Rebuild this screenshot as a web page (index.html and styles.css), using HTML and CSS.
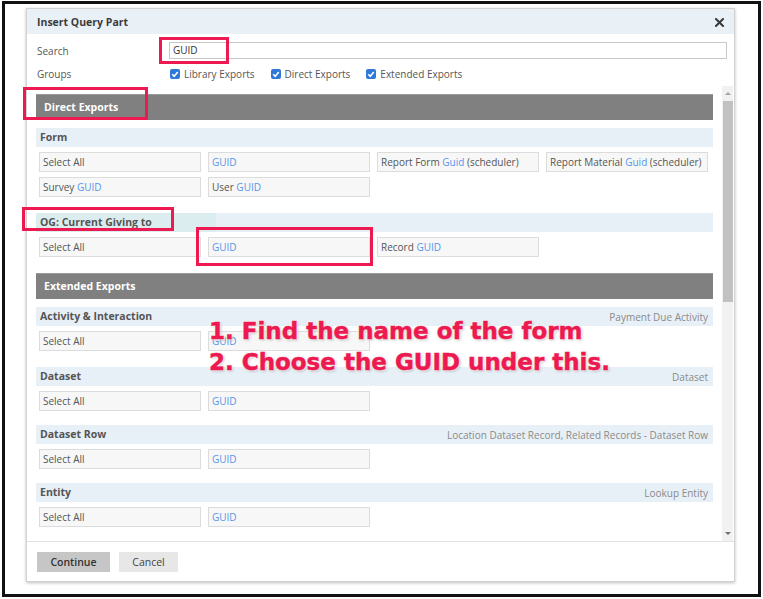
FILE: index.html
```html
<!DOCTYPE html>
<html>
<head>
<meta charset="utf-8">
<link rel="stylesheet" href="styles.css">
</head>
<body>
<div class="frame">
  <div class="dialog">
    <div class="titlebar">
      <span class="title">Insert Query Part</span>
      <svg class="close" width="9" height="9" viewBox="0 0 9 9"><path d="M1 1L8 8M8 1L1 8" stroke="#3a3a3a" stroke-width="2" stroke-linecap="square"/></svg>
    </div>
    <div class="form">
      <div class="row">
        <span class="label">Search</span>
        <div class="input">GUID</div>
      </div>
      <div class="row groups">
        <span class="label">Groups</span>
        <div class="checks">
          <span class="check"><span class="box"><svg width="10" height="10" viewBox="0 0 10 10"><path d="M2.2 5.2L4.2 7.2L7.8 3" fill="none" stroke="#fff" stroke-width="1.6"/></svg></span>Library Exports</span>
          <span class="check"><span class="box"><svg width="10" height="10" viewBox="0 0 10 10"><path d="M2.2 5.2L4.2 7.2L7.8 3" fill="none" stroke="#fff" stroke-width="1.6"/></svg></span>Direct Exports</span>
          <span class="check"><span class="box"><svg width="10" height="10" viewBox="0 0 10 10"><path d="M2.2 5.2L4.2 7.2L7.8 3" fill="none" stroke="#fff" stroke-width="1.6"/></svg></span>Extended Exports</span>
        </div>
      </div>
    </div>
    <div class="scroll">
      <div class="content">
        <div class="bar">Direct Exports</div>
        <div class="group">
          <div class="ghead"><span class="gname">Form</span></div>
          <div class="items">
            <div class="item">Select All</div>
            <div class="item"><span class="g">GUID</span></div>
            <div class="item">Report Form <span class="g">Guid</span> (scheduler)</div>
            <div class="item">Report Material <span class="g">Guid</span> (scheduler)</div>
            <div class="item">Survey <span class="g">GUID</span></div>
            <div class="item">User <span class="g">GUID</span></div>
          </div>
        </div>
        <div class="group">
          <div class="ghead"><span class="gname hl">OG: Current Giving to</span></div>
          <div class="items">
            <div class="item">Select All</div>
            <div class="item"><span class="g">GUID</span></div>
            <div class="item">Record <span class="g">GUID</span></div>
          </div>
        </div>
        <div class="bar">Extended Exports</div>
        <div class="group">
          <div class="ghead"><span class="gname">Activity &amp; Interaction</span><span class="gsub">Payment Due Activity</span></div>
          <div class="items">
            <div class="item">Select All</div>
            <div class="item"><span class="g">GUID</span></div>
          </div>
        </div>
        <div class="group tight">
          <div class="ghead"><span class="gname">Dataset</span><span class="gsub">Dataset</span></div>
          <div class="items">
            <div class="item">Select All</div>
            <div class="item"><span class="g">GUID</span></div>
          </div>
        </div>
        <div class="group tight">
          <div class="ghead"><span class="gname">Dataset Row</span><span class="gsub">Location Dataset Record, Related Records - Dataset Row</span></div>
          <div class="items">
            <div class="item">Select All</div>
            <div class="item"><span class="g">GUID</span></div>
          </div>
        </div>
        <div class="group">
          <div class="ghead"><span class="gname">Entity</span><span class="gsub">Lookup Entity</span></div>
          <div class="items">
            <div class="item">Select All</div>
            <div class="item"><span class="g">GUID</span></div>
          </div>
        </div>
      </div>
      <div class="sbar">
        <span class="arrow up"></span>
        <span class="thumb"></span>
        <span class="fill"></span>
        <span class="arrow down"></span>
      </div>
    </div>
    <div class="footer">
      <div class="btn primary">Continue</div>
      <div class="btn">Cancel</div>
    </div>
  </div>
</div>
<div class="mark m1"></div>
<div class="mark m2"></div>
<div class="mark m3"></div>
<div class="mark m4"></div>
<div class="note">1. Find the name of the form<br>2. Choose the GUID under this.</div>
</body>
</html>
```
FILE: styles.css
```css
html, body {
  margin: 0;
  padding: 0;
  background: #fff;
}
body {
  font-family: "Open Sans", "Liberation Sans", sans-serif;
  font-size: 10px;
  color: #555;
  width: 763px;
  height: 599px;
  overflow: hidden;
}
.frame {
  margin: 1px 0 0 2px;
  width: 759px;
  height: 596px;
  box-sizing: border-box;
  border: 3px solid #111;
  padding: 4px 0 0 21px;
  background: #fff;
}
.dialog {
  width: 709px;
  height: 574px;
  box-sizing: border-box;
  border: 1px solid #d2d2d2;
  box-shadow: 0 1px 3px rgba(0,0,0,0.25);
  display: flex;
  flex-direction: column;
  background: #fff;
}
.titlebar {
  height: 25px;
  flex: none;
  background: #e9f1f7;
  display: flex;
  align-items: center;
  justify-content: space-between;
  padding: 0 10px 0 10px;
}
.title {
  font-weight: bold;
  font-size: 10.5px;
  color: #3c3c3c;
}
.close {
  display: block;
  margin-top: 1px;
}
.form {
  flex: none;
  height: 54px;
  box-sizing: border-box;
  padding: 8px 7px 0 10px;
}
.row {
  display: flex;
  align-items: center;
  height: 17px;
}
.row.groups {
  margin-top: 7px;
  height: 15px;
}
.label {
  width: 132px;
  flex: none;
  color: #555;
}
.input {
  flex: 1;
  height: 17px;
  box-sizing: border-box;
  border: 1px solid #c8c8c8;
  padding: 0 3px;
  line-height: 15px;
  color: #333;
}
.checks {
  display: flex;
  gap: 16px;
  padding-left: 1px;
}
.check {
  display: flex;
  align-items: center;
  gap: 4px;
  color: #555;
}
.box {
  width: 10px;
  height: 10px;
  border-radius: 2px;
  background: #2f78d8;
  display: block;
}
.box svg {
  display: block;
}
.scroll {
  flex: none;
  height: 453px;
  display: flex;
}
.content {
  width: 677px;
  margin-left: 9px;
  padding-top: 6px;
  overflow: hidden;
  flex: none;
}
.bar {
  height: 26px;
  box-sizing: border-box;
  background: #808080;
  border-top: 1px solid #9a9a9a;
  color: #fff;
  font-weight: bold;
  font-size: 10.5px;
  line-height: 24px;
  padding-left: 8px;
  margin-bottom: 8px;
}
.group {
  margin-bottom: 16px;
}
.group.tight {
  margin-bottom: 14px;
}
.ghead {
  height: 19px;
  background: #e8f0f7;
  display: flex;
  justify-content: space-between;
  align-items: center;
  padding: 0 5px 0 0;
}
.gname {
  font-weight: bold;
  font-size: 10.5px;
  color: #555;
  padding-left: 4px;
  line-height: 19px;
}
.gname.hl {
  width: 176px;
  background: #dcedf0;
}
.gsub {
  color: #8a8a8a;
}
.items {
  display: grid;
  grid-template-columns: repeat(4, 162px);
  gap: 5px 7px;
  padding: 5px 0 0 3px;
}
.item {
  height: 20px;
  box-sizing: border-box;
  border: 1px solid #dcdcdc;
  background: #f7f7f7;
  padding: 0 3px;
  line-height: 18px;
  color: #555;
  white-space: nowrap;
}
.g {
  color: #5596ea;
}
.sbar {
  width: 11px;
  margin-left: 9px;
  background: #f1f1f1;
  display: flex;
  flex-direction: column;
  align-items: center;
  margin-top: -2px;
}
.arrow {
  height: 15px;
  width: 11px;
  flex: none;
  position: relative;
}
.arrow.up::after, .arrow.down::after {
  content: "";
  position: absolute;
  left: 3px;
  border-left: 3px solid transparent;
  border-right: 3px solid transparent;
}
.arrow.up::after {
  top: 6px;
  border-bottom: 3px solid #a3a3a3;
}
.arrow.down::after {
  top: 6px;
  border-top: 3px solid #707070;
}
.thumb {
  width: 10px;
  height: 201px;
  background: #c1c1c1;
  flex: none;
}
.fill {
  flex: 1;
}
.footer {
  flex: 1;
  border-top: 1px solid #e2e2e2;
  display: flex;
  align-items: flex-start;
  gap: 9px;
  padding: 10px 0 0 10px;
}
.btn {
  height: 20px;
  line-height: 20px;
  background: #e7e7e7;
  color: #444;
  font-size: 10.5px;
  width: 59px;
  text-align: center;
}
.btn.primary {
  width: 73px;
  background: #c6c6c6;
  color: #333;
  font-weight: 600;
}
.mark {
  position: absolute;
  border: 3px solid #ec1a50;
  box-sizing: border-box;
}
.m1 { left: 159px; top: 37px; width: 70px; height: 27px; }
.m2 { left: 23px; top: 87px; width: 125px; height: 33px; }
.m3 { left: 22px; top: 207px; width: 152px; height: 24px; }
.m4 { left: 196px; top: 227px; width: 177px; height: 39px; }
.note {
  position: absolute;
  left: 209px;
  top: 316px;
  font-family: "DejaVu Sans", sans-serif;
  font-weight: bold;
  font-size: 23px;
  line-height: 31px;
  color: #ec1a50;
  -webkit-text-stroke: 0.5px #ec1a50;
  text-shadow: 0 0 2px #fff, 0 0 2px #fff, 0 0 3px #fff, 1px 1px 3px rgba(0,0,0,0.35);
  white-space: nowrap;
}
```
